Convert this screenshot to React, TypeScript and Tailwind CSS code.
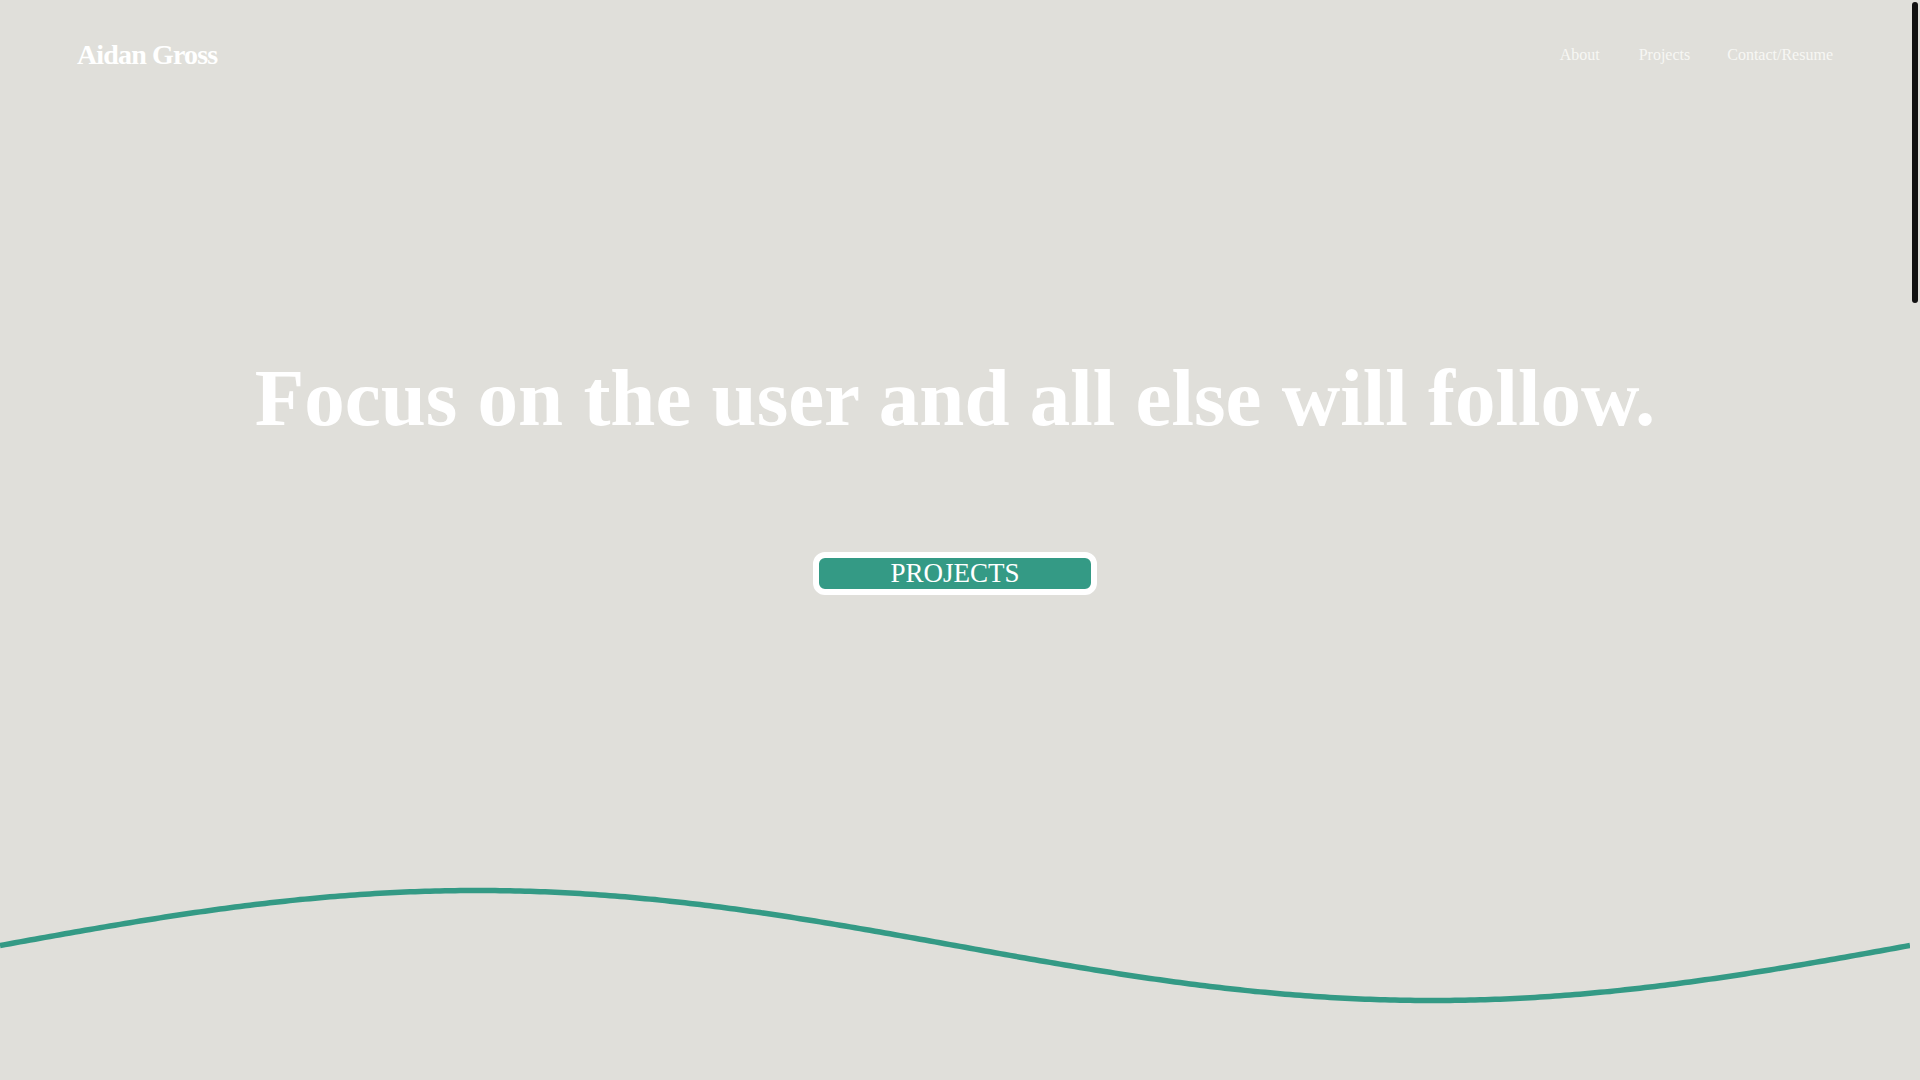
import React from "react";

function wavePath(): string {
  const w = 1910;
  const cy = 105.5;
  const amp = 55;
  const pts: string[] = [];
  for (let x = 0; x <= w; x += 5) {
    const y = cy - amp * Math.sin((2 * Math.PI * x) / w);
    pts.push(`${x === 0 ? "M" : "L"}${x},${y.toFixed(2)}`);
  }
  return pts.join(" ");
}

export default function App() {
  const d = wavePath();
  return (
    <div className="flex h-screen w-full overflow-hidden bg-[#e0dfda] [font-family:'Liberation_Serif','Times_New_Roman',serif]">
      <div className="flex h-full min-w-0 flex-1 flex-col">
        <header className="flex h-[108px] shrink-0 items-center justify-between px-[77px] pt-[2px]">
          <a className="text-[28px] font-bold tracking-[-0.85px] text-white" href="#">
            Aidan Gross
          </a>
          <nav className="flex items-center text-[16px] text-[#f7f7f4]">
            <a href="#about">About</a>
            <a className="ml-[39px]" href="#projects">Projects</a>
            <a className="ml-[37px]" href="#contact">Contact/Resume</a>
          </nav>
        </header>
        <main className="flex flex-1 flex-col items-center justify-center pb-[3px]">
          <h1 className="text-[81px] font-bold leading-[1.2] text-white">
            Focus on the user and all else will follow.
          </h1>
          <div className="mt-[104px] flex h-[43px] w-[284px] items-center justify-center rounded-[12px] border-[6px] border-white bg-[#349a85]">
            <span className="text-[27px] leading-none text-white">PROJECTS</span>
          </div>
        </main>
        <svg className="block h-[240px] w-full shrink-0" viewBox="0 0 1910 240" fill="none">
          <path d={d} stroke="#349a85" strokeWidth="5.5" fill="none" />
        </svg>
      </div>
      <div className="h-full w-[10px] shrink-0 bg-[#e0dfda] pl-[2px] pt-[2px]">
        <div className="h-[301px] w-[6px] rounded-full bg-[#111111]" />
      </div>
    </div>
  );
}
